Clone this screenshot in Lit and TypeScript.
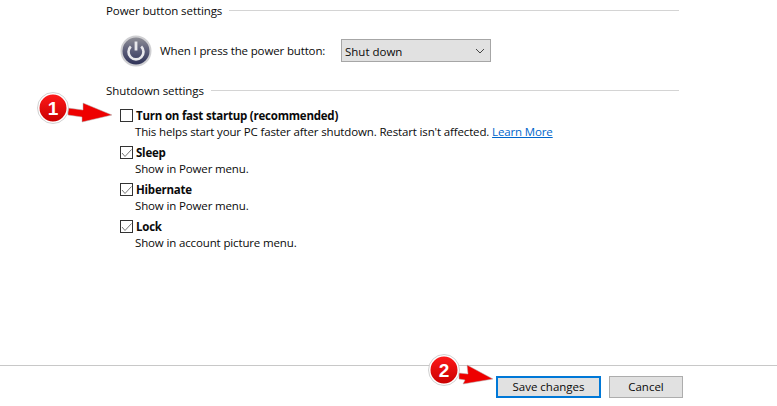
import { LitElement, html, css, svg } from "lit";
import { customElement } from "lit/decorators.js";

const rows = [
  { label: "Sleep", desc: "Show in Power menu." },
  { label: "Hibernate", desc: "Show in Power menu." },
  { label: "Lock", desc: "Show in account picture menu." },
];

@customElement("app-root")
export class AppRoot extends LitElement {
  static styles = css`
    :host {
      display: block;
      position: relative;
      width: 777px;
      height: 406px;
      overflow: hidden;
      background: #fff;
      font-family: "Open Sans", "Noto Sans", sans-serif;
      font-size: 11.5px;
      line-height: 17px;
      letter-spacing: -0.14px;
      color: #0a0a0a;
    }
    .content { display: flex; flex-direction: column; padding: 2px 98px 0 106px; height: 363px; box-sizing: border-box; }
    .head { display: flex; align-items: center; gap: 7px; height: 17px; letter-spacing: -0.08px; }
    .head .line { flex: 1; height: 1px; background: #d4d4d4; margin-top: -1px; }
    .power { display: flex; align-items: center; margin: 19px 0 0 14px; height: 25px; }
    .power-icon { width: 32px; height: 32px; margin-right: 8px; flex: none; }
    .power .lbl { width: 181px; }
    .select {
      width: 150px; height: 23px; box-sizing: border-box; border: 1px solid #a6a6a6; background: #e1e1e1;
      display: flex; align-items: center; justify-content: space-between; padding: 2px 4px 0 3px; letter-spacing: 0;
    }
    .head.second { margin-top: 19px; }
    .list { display: flex; flex-direction: column; margin: 8px 0 0 14px; }
    .item { display: grid; grid-template-columns: 15px 1fr; column-gap: 1px; margin-bottom: 4px; }
    .box { width: 11px; height: 11px; border: 1px solid #333; margin-top: 2px; display: block; background: #fff; }
    .box svg { display: block; width: 11px; height: 11px; }
    .label { font-weight: 700; letter-spacing: -0.22px; }
    .desc { grid-column: 2; margin: -1px 0 0 -1px; }
    a { color: #0066cc; text-decoration: underline; }
    .footer { border-top: 1px solid #c8c8c8; display: flex; justify-content: flex-end; gap: 8px; padding: 10px 94px 0 0; margin-top: 2px; letter-spacing: 0; }
    .btn { height: 22px; box-sizing: border-box; border: 1px solid #adadad; background: #e1e1e1; display: flex; align-items: center; justify-content: center; width: 74px; padding-bottom: 2px; }
    .btn.primary { width: 105px; border: 2px solid #0078d7; }
    .callout { position: absolute; display: block; }
    .c1 { left: 37px; top: 91px; }
    .c2 { left: 428px; top: 353px; }
    .num { font: 700 19px/1 "Liberation Sans", sans-serif; fill: #fff; letter-spacing: 0; }
  `;

  private callout(cls: string, n: string, d: string, w: number) {
    return html`<svg class="callout ${cls}" width=${w} height="44" viewBox="0 0 ${w} 44">
      <defs>
        <linearGradient id="g${n}" x1="0" y1="0" x2="0" y2="1">
          <stop offset="0" stop-color="#ff1a1a" /><stop offset="1" stop-color="#c80000" />
        </linearGradient>
      </defs>
      ${svg`<path d=${d} fill="#ee0000" stroke="#b5b5b5" stroke-width="0.5"/>`}
      <circle cx="16" cy="17" r="14.5" fill="url(#g${n})" stroke="#fff" stroke-width="2" />
      <circle cx="16" cy="17" r="15.5" fill="none" stroke="#bdbdbd" stroke-width="0.7" />
      <text class="num" x="16" y="24" text-anchor="middle">${n}</text>
    </svg>`;
  }

  render() {
    return html`
      <div class="content">
        <div class="head"><span>Power button settings</span><span class="line"></span></div>
        <div class="power">
          <svg class="power-icon" viewBox="0 0 32 32">
            <defs>
              <linearGradient id="ring" x1="0" y1="0" x2="0" y2="1">
                <stop offset="0" stop-color="#8e8e96" /><stop offset="0.5" stop-color="#5a5c78" /><stop offset="1" stop-color="#2f3358" />
              </linearGradient>
            </defs>
            <circle cx="16" cy="16" r="15.5" fill="#cfcfd2" />
            <circle cx="16" cy="16" r="13.5" fill="url(#ring)" />
            <path d="M10.8 11.5 A7.5 7.5 0 1 0 21.2 11.5" fill="none" stroke="#e8e8ec" stroke-width="2.6" />
            <rect x="14.6" y="6.5" width="2.8" height="9" fill="#e8e8ec" />
          </svg>
          <span class="lbl">When I press the power button:</span>
          <div class="select">
            <span>Shut down</span>
            <svg width="12" height="7" viewBox="0 0 12 7"><path d="M2 1l4 4 4-4" fill="none" stroke="#444" stroke-width="1" /></svg>
          </div>
        </div>
        <div class="head second"><span>Shutdown settings</span><span class="line"></span></div>
        <div class="list">
          <div class="item">
            <span class="box"></span><span class="label">Turn on fast startup (recommended)</span>
            <span class="desc">This helps start your PC faster after shutdown. Restart isn't affected. <a>Learn More</a></span>
          </div>
          ${rows.map(
            (r) => html`<div class="item">
              <span class="box"><svg viewBox="0 0 11 11"><path d="M1 6l3 3.5 6.5-7" fill="none" stroke="#777" stroke-width="1" /></svg></span>
              <span class="label">${r.label}</span>
              <span class="desc">${r.desc}</span>
            </div>`
          )}
        </div>
      </div>
      <div class="footer">
        <div class="btn primary">Save changes</div>
        <div class="btn">Cancel</div>
      </div>
      ${this.callout("c1", "1", "M31 17 L46 19 L46 12 L75 24 L45 31 L45 26 L31 24 Z", 80)}
      ${this.callout("c2", "2", "M31 20 L40 21 L39 12 L65 26 L35 31 L37 27 L31 26 Z", 72)}
    `;
  }
}
